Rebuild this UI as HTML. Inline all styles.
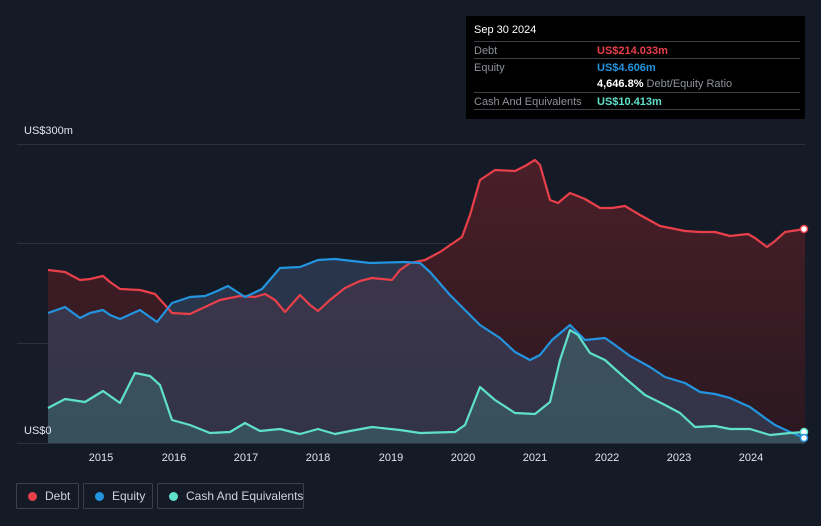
<!DOCTYPE html>
<html><head><style>
body{margin:0;background:#151b26;font-family:"Liberation Sans",sans-serif;}
.wrap{position:relative;width:821px;height:526px;overflow:hidden;background:#151b26;}
.tt{position:absolute;left:466px;top:16px;width:339px;height:103px;background:#000;color:#fff;font-size:11px;}
.tt .h{position:absolute;left:8px;top:8px;font-size:11px;}
.tt .r{position:absolute;left:8px;width:326px;border-top:1px solid #3a3f48;height:17px;}
.tt .l{position:absolute;left:0;top:3px;color:#8d9199;white-space:nowrap;}
.tt .v{position:absolute;left:123px;top:3px;font-weight:bold;white-space:nowrap;}
.ax{position:absolute;color:#e0e3e8;font-size:11px;}
.lg{position:absolute;top:483px;height:26px;border:1px solid #3a404c;border-radius:2px;color:#cfd3da;font-size:12px;box-sizing:border-box;white-space:nowrap;}
.lg i{position:absolute;left:11px;top:8px;width:9px;height:9px;border-radius:50%;}
.lg span{position:absolute;left:28px;top:5px;}
</style></head><body><div class="wrap">
<svg width="821" height="526" style="position:absolute;left:0;top:0">
<defs>
<linearGradient id="gd" x1="0" y1="0" x2="0" y2="1"><stop offset="0" stop-color="#4a1f28"/><stop offset="1" stop-color="#2a1820"/></linearGradient>
</defs>
<g stroke="#2a303c" stroke-width="1">
<line x1="17" y1="144.5" x2="805" y2="144.5"/><line x1="17" y1="243.5" x2="805" y2="243.5"/><line x1="17" y1="343.5" x2="805" y2="343.5"/><line x1="17" y1="443.5" x2="805" y2="443.5"/>
</g>
<path d="M48,270 L65,272 L80,280 L90,279 L103,276 L110,282 L120,289 L140,290 L155,294 L165,305 L172,313 L190,314 L205,307 L220,300 L240,296 L255,297 L265,294 L275,300 L285,312 L300,295 L310,305 L318,311 L330,300 L345,288 L360,281 L372,278 L392,280 L400,270 L410,263 L425,260 L440,252 L462,237 L470,215 L480,180 L495,170 L515,171 L525,166 L535,160 L540,165 L550,200 L558,203 L570,193 L585,199 L600,208 L612,208 L625,206 L640,215 L660,226 L685,231 L700,232 L715,232 L730,236 L748,234 L755,238 L767,247 L775,241 L785,232 L805,229 L805,443 L48,443Z" fill="url(#gd)"/>
<path d="M48,313 L65,307 L80,318 L90,313 L103,310 L110,315 L120,319 L140,310 L157,322 L172,303 L190,297 L205,296 L215,292 L228,286 L245,297 L262,289 L280,268 L300,267 L318,260 L335,259 L370,263 L405,262 L420,263 L430,272 L450,295 L480,325 L500,338 L515,352 L530,360 L540,355 L552,340 L570,325 L585,340 L605,338 L615,345 L630,356 L650,367 L665,377 L685,383 L700,392 L715,394 L730,398 L750,407 L765,418 L775,425 L790,432 L805,438 L805,443 L48,443Z" fill="#3a4a6a" fill-opacity="0.55"/>
<path d="M48,408 L65,399 L85,402 L103,391 L120,403 L135,373 L150,376 L160,385 L172,420 L190,425 L210,433 L230,432 L245,423 L260,431 L280,429 L300,434 L318,429 L335,434 L350,431 L372,427 L400,430 L420,433 L455,432 L465,425 L480,387 L495,400 L515,413 L535,414 L550,402 L560,360 L570,330 L578,335 L590,353 L605,360 L625,378 L645,395 L665,405 L680,413 L695,427 L715,426 L730,429 L750,429 L770,435 L790,433 L805,432 L805,443 L48,443Z" fill="#3d6e70" fill-opacity="0.5"/>
<g fill="none" stroke-width="2.2" stroke-linejoin="round">
<path stroke="#e8404a" d="M48,270 L65,272 L80,280 L90,279 L103,276 L110,282 L120,289 L140,290 L155,294 L165,305 L172,313 L190,314 L205,307 L220,300 L240,296 L255,297 L265,294 L275,300 L285,312 L300,295 L310,305 L318,311 L330,300 L345,288 L360,281 L372,278 L392,280 L400,270 L410,263 L425,260 L440,252 L462,237 L470,215 L480,180 L495,170 L515,171 L525,166 L535,160 L540,165 L550,200 L558,203 L570,193 L585,199 L600,208 L612,208 L625,206 L640,215 L660,226 L685,231 L700,232 L715,232 L730,236 L748,234 L755,238 L767,247 L775,241 L785,232 L805,229"/>
<path stroke="#2394e0" d="M48,313 L65,307 L80,318 L90,313 L103,310 L110,315 L120,319 L140,310 L157,322 L172,303 L190,297 L205,296 L215,292 L228,286 L245,297 L262,289 L280,268 L300,267 L318,260 L335,259 L370,263 L405,262 L420,263 L430,272 L450,295 L480,325 L500,338 L515,352 L530,360 L540,355 L552,340 L570,325 L585,340 L605,338 L615,345 L630,356 L650,367 L665,377 L685,383 L700,392 L715,394 L730,398 L750,407 L765,418 L775,425 L790,432 L805,438"/>
<path stroke="#5fe0cc" d="M48,408 L65,399 L85,402 L103,391 L120,403 L135,373 L150,376 L160,385 L172,420 L190,425 L210,433 L230,432 L245,423 L260,431 L280,429 L300,434 L318,429 L335,434 L350,431 L372,427 L400,430 L420,433 L455,432 L465,425 L480,387 L495,400 L515,413 L535,414 L550,402 L560,360 L570,330 L578,335 L590,353 L605,360 L625,378 L645,395 L665,405 L680,413 L695,427 L715,426 L730,429 L750,429 L770,435 L790,433 L805,432"/>
</g>
<circle cx="804" cy="229" r="3.5" fill="#fff" stroke="#e8404a" stroke-width="1.5"/>
<circle cx="804" cy="432" r="3.5" fill="#fff" stroke="#5fe0cc" stroke-width="1.5"/>
<circle cx="804" cy="438" r="3.5" fill="#fff" stroke="#2394e0" stroke-width="1.5"/>
<g fill="#e0e3e8" font-size="11" font-family="Liberation Sans" text-anchor="middle">
<text x="101" y="461">2015</text><text x="174" y="461">2016</text><text x="246" y="461">2017</text><text x="318" y="461">2018</text><text x="391" y="461">2019</text><text x="463" y="461">2020</text><text x="535" y="461">2021</text><text x="607" y="461">2022</text><text x="679" y="461">2023</text><text x="751" y="461">2024</text>
</g>
</svg>
<div class="ax" style="left:24px;top:125px">US$300m</div>
<div class="ax" style="left:24px;top:425px">US$0</div>
<div class="tt">
<div class="h">Sep 30 2024</div>
<div class="r" style="top:25px"><span class="l">Debt</span><span class="v" style="color:#e8404a">US$214.033m</span></div>
<div class="r" style="top:42px"><span class="l">Equity</span><span class="v" style="color:#2394e0">US$4.606m</span></div>
<div class="r" style="top:59px;border-top:none"><span class="v" style="color:#fff">4,646.8% <span style="font-weight:normal;color:#8d9199">Debt/Equity Ratio</span></span></div>
<div class="r" style="top:76px"><span class="l">Cash And Equivalents</span><span class="v" style="color:#5fe0cc">US$10.413m</span></div>
<div class="r" style="top:93px"></div>
</div>
<div class="lg" style="left:16px;width:63px"><i style="background:#e8404a"></i><span>Debt</span></div>
<div class="lg" style="left:83px;width:70px"><i style="background:#2394e0"></i><span>Equity</span></div>
<div class="lg" style="left:157px;width:147px"><i style="background:#5fe0cc"></i><span>Cash And Equivalents</span></div>
</div></body></html>
